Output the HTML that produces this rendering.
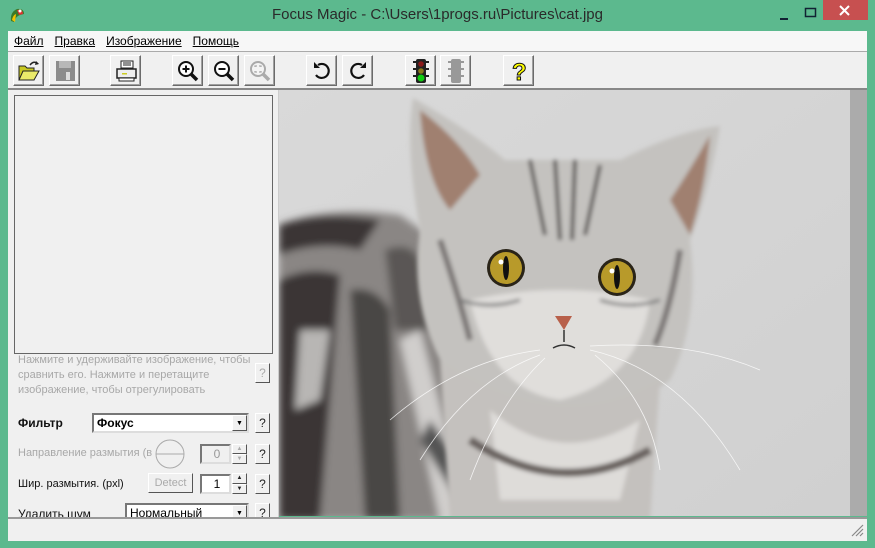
<!DOCTYPE html>
<html><head><meta charset="utf-8"><style>
*{margin:0;padding:0;box-sizing:border-box}
body{width:875px;height:548px;overflow:hidden;background:#5cb98e;font-family:"Liberation Sans",sans-serif;position:relative}
.abs{position:absolute}
.title{left:0;top:0;width:875px;height:31px;text-align:center;font-size:15px;color:#2a2a2a;line-height:30px}
.menu{left:8px;top:31px;width:859px;height:21px;background:#f7f7f7;border-bottom:1px solid #aaa;font-size:12px;line-height:20px}
.menu span{margin-left:6px;margin-right:5px;text-decoration:underline;text-decoration-thickness:1px}
.tool{left:8px;top:52px;width:859px;height:38px;background:#f0f0f0;border-bottom:2px solid #888}
.btn{position:absolute;top:3px;width:31px;height:31px;background:#f0f0f0;border:1px solid;border-color:#fff #6b6b6b #6b6b6b #fff;box-shadow:inset -1px -1px 0 #a0a0a0}
.btn svg{position:absolute;left:2px;top:2px}
.left{left:8px;top:90px;width:271px;height:427px;background:#f0f0f0;border-right:1px solid #ccc;overflow:hidden}
.preview{left:6px;top:5px;width:259px;height:259px;border:1px solid #666;background:#f0f0f0}
.hint{left:10px;top:263px;font-size:11px;color:#a8a8a8;line-height:15px}
.q{position:absolute;width:15px;height:20px;background:#f0f0f0;border:1px solid;border-color:#fff #555 #555 #fff;font-size:12px;text-align:center;line-height:18px;color:#222}
.lbl{position:absolute;font-size:11px;color:#111}
.combo{position:absolute;height:20px;background:#fff;border:2px solid;border-color:#777 #ddd #ddd #777;font-size:12px;line-height:16px;padding-left:3px}
.dd{position:absolute;right:0;top:0;width:15px;height:16px;background:#f0f0f0;border:1px solid;border-color:#fff #555 #555 #fff;font-size:7px;text-align:center;line-height:15px}
.img{left:279px;top:90px;width:571px;height:426px;overflow:hidden;background:#d6d6d6}
.sb{left:850px;top:90px;width:17px;height:426px;background:#ababab}
.status{left:8px;top:517px;width:859px;height:24px;background:#f0f0f0;border-top:2px solid #999}
</style></head><body>
<div class="abs title">Focus Magic - C:\Users\1progs.ru\Pictures\cat.jpg</div>
<svg class="abs" style="left:8px;top:6px" width="18" height="18"><path d="M3 15 Q2 6 9 3 Q16 2 16 8 L12 9 Q8 10 6 16Z" fill="#3a7a2a"/><path d="M9 4 Q15 3 15 8 L11 9Z" fill="#d33"/><circle cx="12" cy="5" r="1.5" fill="#fff"/><path d="M4 14 Q5 9 8 8 L7 16Z" fill="#f2c200"/></svg>
<svg class="abs" style="left:778px;top:10px" width="16" height="12"><rect x="2" y="8" width="8" height="2" fill="#123"/></svg>
<svg class="abs" style="left:803px;top:6px" width="16" height="12"><rect x="2.5" y="2.5" width="10" height="8" fill="none" stroke="#123" stroke-width="1.5"/></svg>
<div class="abs" style="left:823px;top:0;width:45px;height:20px;background:#c75050"></div>
<svg class="abs" style="left:838px;top:5px" width="14" height="12"><path d="M2 1L11 10M11 1L2 10" stroke="#fff" stroke-width="2"/></svg>
<div class="abs menu"><span>Файл</span><span>Правка</span><span>Изображение</span><span>Помощь</span></div>
<div class="abs tool">
<div class="btn" style="left:5px"><svg width="26" height="26"><path d="M3 8h6l2 2h7v12H3z" fill="#c8c820" stroke="#222"/><path d="M3 22l4-9h16l-5 9z" fill="#eaea6a" stroke="#222"/><path d="M14 7 Q18 2 22 6" fill="none" stroke="#222" stroke-width="1.5"/><path d="M20 3l3 3-4 1z" fill="#222"/></svg></div>
<div class="btn" style="left:41px"><svg width="26" height="26"><rect x="4" y="3" width="19" height="20" fill="#8c8c8c"/><rect x="7" y="3" width="12" height="7" fill="#b8b8b8"/><rect x="14" y="14" width="4" height="8" fill="#ddd"/></svg></div>
<div class="btn" style="left:102px"><svg width="26" height="26"><path d="M8 3h12v7H8z" fill="#fff" stroke="#222"/><path d="M4 11h19v9H4z" fill="#eee" stroke="#222" stroke-width="1.5"/><path d="M6 20h15v3H6z" fill="#fff" stroke="#222"/><rect x="9" y="15" width="5" height="1.5" fill="#cc2"/><path d="M10 5h8M10 7h8" stroke="#222"/></svg></div>
<div class="btn" style="left:164px"><svg width="26" height="26"><circle cx="11" cy="11" r="7" fill="#fff" stroke="#111" stroke-width="2"/><path d="M16 16l6 6" stroke="#111" stroke-width="3.5"/><path d="M7.5 11h7M11 7.5v7" stroke="#111" stroke-width="2"/></svg></div>
<div class="btn" style="left:200px"><svg width="26" height="26"><circle cx="11" cy="11" r="7" fill="#fff" stroke="#111" stroke-width="2"/><path d="M16 16l6 6" stroke="#111" stroke-width="3.5"/><path d="M7.5 11h7" stroke="#111" stroke-width="2"/></svg></div>
<div class="btn" style="left:236px"><svg width="26" height="26"><circle cx="11" cy="11" r="7" fill="#f4f4f4" stroke="#aaa" stroke-width="2"/><path d="M16 16l6 6" stroke="#aaa" stroke-width="3.5"/><path d="M8 9v-1h2M14 9v-1h-2M8 13v1h2M14 13v1h-2" stroke="#aaa" stroke-width="1.3" fill="none"/></svg></div>
<div class="btn" style="left:298px"><svg width="26" height="26"><path d="M9 7 A7 7 0 1 1 7 17" fill="none" stroke="#111" stroke-width="2.2"/><path d="M5 4v6h6z" fill="#111"/></svg></div>
<div class="btn" style="left:334px"><svg width="26" height="26"><path d="M17 7 A7 7 0 1 0 19 17" fill="none" stroke="#111" stroke-width="2.2"/><path d="M21 4v6h-6z" fill="#111"/></svg></div>
<div class="btn" style="left:397px"><svg width="26" height="26"><rect x="8" y="1" width="10" height="24" rx="2" fill="#222"/><path d="M5 4h3M18 4h3M5 11h3M18 11h3M5 18h3M18 18h3" stroke="#222" stroke-width="2"/><circle cx="13" cy="6" r="2.8" fill="#8a1a1a"/><circle cx="13" cy="13" r="2.8" fill="#8a7a1a"/><circle cx="13" cy="20" r="3.5" fill="#1c1"/></svg></div>
<div class="btn" style="left:432px"><svg width="26" height="26"><rect x="8" y="1" width="10" height="24" rx="2" fill="#999"/><path d="M5 4h3M18 4h3M5 11h3M18 11h3M5 18h3M18 18h3" stroke="#999" stroke-width="2"/></svg></div>
<div class="btn" style="left:495px"><svg width="26" height="26"><text x="6" y="22" font-family="Liberation Sans" font-weight="bold" font-size="24" fill="#ff0" stroke="#111" stroke-width="1">?</text></svg></div>
</div>
<div class="abs left">
<div class="abs preview"></div>
<div class="abs hint">Нажмите и удерживайте изображение, чтобы<br>сравнить его. Нажмите и перетащите<br>изображение, чтобы отрегулировать</div>
<div class="q" style="left:247px;top:273px;color:#aaa">?</div>
<div class="lbl" style="left:10px;top:326px;font-weight:bold;font-size:12px">Фильтр</div>
<div class="combo" style="left:84px;top:323px;width:157px;font-weight:bold">Фокус<div class="dd">▼</div></div>
<div class="q" style="left:247px;top:323px">?</div>
<div class="lbl" style="left:10px;top:357px;color:#a8a8a8">Направление размытия (в</div>
<svg class="abs" style="left:146px;top:348px" width="32" height="32"><circle cx="16" cy="16" r="14" fill="none" stroke="#aaa"/><path d="M2 16h28" stroke="#aaa"/></svg>
<div class="combo" style="left:192px;top:354px;width:31px;color:#999;background:#f0f0f0;text-align:center">0</div>
<div class="q" style="left:224px;top:354px;height:10px;font-size:6px;line-height:8px;color:#aaa">▲</div>
<div class="q" style="left:224px;top:364px;height:10px;font-size:6px;line-height:8px;color:#aaa">▼</div>
<div class="q" style="left:247px;top:354px">?</div>
<div class="lbl" style="left:10px;top:388px">Шир. размытия. (pxl)</div>
<div class="q" style="left:140px;top:383px;width:45px;color:#aaa;font-size:11px">Detect</div>
<div class="combo" style="left:192px;top:384px;width:31px;text-align:center">1</div>
<div class="q" style="left:224px;top:383px;height:11px;font-size:6px;line-height:9px">▲</div>
<div class="q" style="left:224px;top:394px;height:10px;font-size:6px;line-height:8px">▼</div>
<div class="q" style="left:247px;top:384px">?</div>
<div class="lbl" style="left:10px;top:417px;font-size:12px">Удалить шум</div>
<div class="combo" style="left:117px;top:413px;width:124px">Нормальный<div class="dd">▼</div></div>
<div class="q" style="left:247px;top:413px">?</div>
</div>
<div class="abs img"><svg width="571" height="426" viewBox="279 90 571 426">
<defs><filter id="b" x="-20%" y="-20%" width="140%" height="140%"><feGaussianBlur stdDeviation="4"/></filter><filter id="b2"><feGaussianBlur stdDeviation="2"/></filter>
<linearGradient id="bg" x1="0" y1="0" x2="1" y2="1"><stop offset="0" stop-color="#d9d9d9"/><stop offset="1" stop-color="#d0d0d0"/></linearGradient></defs>
<rect x="279" y="90" width="571" height="426" fill="url(#bg)"/>
<g filter="url(#b)">
<path d="M279 225 Q330 205 400 215 L520 300 L640 520 L279 520Z" fill="#8a8684"/>
<path d="M279 225 Q320 210 380 220 L360 250 Q320 240 279 255Z" fill="#3a3634"/>
<path d="M279 280 Q310 265 340 275 L320 520 L279 520Z" fill="#3a3634"/>
<path d="M350 290 Q375 285 390 310 L400 520 L365 520Z" fill="#4a4644"/>
<path d="M300 330 L330 330 L320 400 L295 410Z" fill="#b8b6b4"/>
<path d="M385 250 Q410 240 420 260 L430 330 L395 330Z" fill="#5a5654"/>
<path d="M420 330 L470 520 L440 520 L400 340Z" fill="#d0cecc"/>
<path d="M430 420 L500 520 L470 520 L420 440Z" fill="#555"/>
</g>
<g filter="url(#b2)">
<path d="M413 98 Q470 130 505 160 L620 160 Q680 130 720 126 Q710 190 690 240 Q700 320 670 380 Q620 420 560 420 Q480 420 440 360 Q410 300 420 230 Q405 150 413 98Z" fill="#c4c2bf"/>
<path d="M420 110 Q460 140 480 175 L450 210 Q425 180 420 110Z" fill="#a08070"/>
<path d="M710 135 Q690 170 670 200 L690 235 Q705 190 710 135Z" fill="#a08070"/>
<path d="M470 300 Q560 280 650 300 Q640 380 560 400 Q490 390 470 300Z" fill="#e0dedb"/>
<path d="M440 360 Q560 440 660 380 L650 520 L450 520Z" fill="#c4c1be"/>
<path d="M490 410 Q560 470 640 420 L620 500 L500 500Z" fill="#dedcd9"/>
<path d="M530 160 L545 235 M555 160 L560 240 M575 160 L572 240 M600 165 L585 235" stroke="#5a5654" stroke-width="4"/>
<path d="M440 240 Q460 300 470 340 M680 250 Q670 310 655 345" stroke="#7a7674" stroke-width="6" fill="none"/>
<path d="M460 300 Q490 310 520 300 M600 300 Q630 310 660 300" stroke="#777" stroke-width="3" fill="none"/>
<path d="M470 440 Q560 500 650 450" stroke="#6a6460" stroke-width="8" fill="none"/>
</g>
<circle cx="506" cy="268" r="19" fill="#2a2418"/><circle cx="506" cy="268" r="16" fill="#b89a2a"/><ellipse cx="506" cy="268" rx="3" ry="12" fill="#111"/><circle cx="501" cy="262" r="2.5" fill="#fff"/>
<circle cx="617" cy="277" r="19" fill="#2a2418"/><circle cx="617" cy="277" r="16" fill="#b89a2a"/><ellipse cx="617" cy="277" rx="3" ry="12" fill="#111"/><circle cx="612" cy="271" r="2.5" fill="#fff"/>
<path d="M555 316 L572 316 L564 330Z" fill="#b8604a"/>
<path d="M564 330 L564 342 M553 348 Q564 342 575 348" stroke="#333" stroke-width="1.5" fill="none"/>
<g stroke="#fff" stroke-width="0.8" fill="none" opacity="0.8"><path d="M540 350 Q460 360 390 420"/><path d="M540 355 Q470 380 420 460"/><path d="M545 358 Q500 400 470 480"/><path d="M590 350 Q680 370 740 470"/><path d="M590 346 Q690 340 760 370"/><path d="M595 355 Q650 400 660 470"/></g>
</svg></div>
<div class="abs sb"></div>
<div class="abs status"><svg class="abs" style="right:3px;top:4px" width="14" height="14"><path d="M13 2L2 13M13 6L6 13M13 10L10 13" stroke="#888" stroke-width="1.2"/></svg></div>
</body></html>
